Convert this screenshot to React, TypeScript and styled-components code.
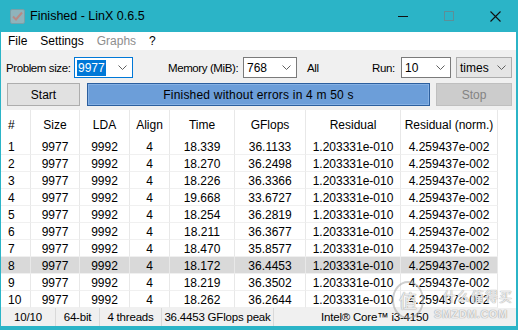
import React from 'react'
import styled, { createGlobalStyle } from 'styled-components'

const GlobalStyle = createGlobalStyle`
    html, body {
        margin: 0;
        padding: 0;
        background: #2bb4c7;
    }
    body {
        font-family: "Liberation Sans", Arial, sans-serif;
        font-size: 12px;
        color: #000;
    }
`

const Frame = styled.div`
    width: 518px;
    height: 330px;
    display: flex;
    flex-direction: column;
    background: #2bb4c7;
    position: relative;
    overflow: hidden;
`

const TitleBar = styled.div`
    height: 32px;
    display: flex;
    align-items: center;
    padding-left: 10px;
    flex-shrink: 0;
`

const Title = styled.div`
    margin-left: 5px;
    font-size: 12.5px;
    color: #000;
    flex: 1;
`

const WinButton = styled.div`
    width: 46px;
    height: 32px;
    display: flex;
    align-items: center;
    justify-content: center;
`

const Client = styled.div`
    flex: 1;
    margin: 0 2px 4px 1px;
    background: #f0f0f0;
    display: flex;
    flex-direction: column;
    min-height: 0;
`

const MenuBar = styled.div`
    height: 18px;
    background: #fff;
    display: flex;
    align-items: center;
    padding-left: 1px;
`

const MenuItem = styled.div<{ $disabled?: boolean }>`
    padding: 0 7px 0 6px;
    color: ${(p) => (p.$disabled ? '#8d8d8d' : '#000')};
    font-size: 12px;
`

const Controls = styled.div`
    padding: 7px 4px 0 5px;
    display: flex;
    flex-direction: column;
    gap: 5px;
`

const Row = styled.div`
    display: flex;
    align-items: center;
`

const Label = styled.div<{ $ml?: number; $w: number }>`
    margin-left: ${(p) => p.$ml ?? 0}px;
    width: ${(p) => p.$w}px;
    flex-shrink: 0;
    white-space: nowrap;
    font-size: 11.5px;
    letter-spacing: -0.4px;
`

const Combo = styled.div<{ $w: number; $focus?: boolean; $flat?: boolean; $ml?: number }>`
    width: ${(p) => p.$w}px;
    height: 21px;
    margin-left: ${(p) => p.$ml ?? 0}px;
    flex-shrink: 0;
    box-sizing: border-box;
    border: 1px solid ${(p) => (p.$focus ? '#0078d7' : p.$flat ? '#adadad' : '#7a7a7a')};
    background: ${(p) => (p.$flat ? '#e5e5e5' : '#fff')};
    display: flex;
    align-items: center;
    padding-left: 2px;
    position: relative;
`

const ComboText = styled.span<{ $sel?: boolean }>`
    background: ${(p) => (p.$sel ? '#0078d7' : 'transparent')};
    color: ${(p) => (p.$sel ? '#fff' : '#000')};
    padding: 1px 1px;
    line-height: 14px;
`

const Chevron = styled.svg`
    position: absolute;
    right: 5px;
    top: 7px;
`

const Button = styled.div<{ $w: number; $disabled?: boolean }>`
    width: ${(p) => p.$w}px;
    height: 23px;
    box-sizing: border-box;
    border: 1px solid ${(p) => (p.$disabled ? '#bfbfbf' : '#adadad')};
    background: ${(p) => (p.$disabled ? '#cccccc' : '#e1e1e1')};
    color: ${(p) => (p.$disabled ? '#838383' : '#000')};
    display: flex;
    align-items: center;
    justify-content: center;
    flex-shrink: 0;
`

const StartButton = styled(Button)`
    margin-left: 1px;
`

const Progress = styled.div`
    width: 343px;
    height: 23px;
    margin: 0 6px 0 7px;
    box-sizing: border-box;
    border: 1px solid #2c5f9e;
    box-shadow: inset 0 0 0 1px #86b1e4;
    background: #6c9ed9;
    display: flex;
    align-items: center;
    justify-content: center;
    color: #000;
    letter-spacing: 0.2px;
`

const Table = styled.div`
    margin-top: 4px;
    flex: 1;
    background: #fff;
    display: flex;
    flex-direction: column;
    min-height: 0;
`

const cols = '30px 49px 50px 40px 65px 71px 95px 97px 1fr'

const HeadRow = styled.div`
    display: grid;
    grid-template-columns: ${cols};
    height: 28px;
`

const BodyRow = styled.div<{ $sel?: boolean }>`
    display: grid;
    grid-template-columns: ${cols};
    height: 17px;
    background: ${(p) => (p.$sel ? '#d9d9d9' : '#fff')};
`

const Cell = styled.div<{ $left?: boolean; $last?: boolean; $head?: boolean }>`
    display: flex;
    align-items: center;
    justify-content: ${(p) => (p.$left ? 'flex-start' : 'center')};
    padding-left: ${(p) => (p.$left ? 7 : 0)}px;
    padding-top: ${(p) => (p.$head ? 2 : 1)}px;
    border-right: ${(p) => (p.$last ? 'none' : '1px solid #e8e8e8')};
    border-bottom: ${(p) => (p.$head ? 'none' : '1px solid #f0f0f0')};
    box-sizing: border-box;
    white-space: nowrap;
    overflow: hidden;
`

const Filler = styled.div`
    background: #fff;
`

const TableRest = styled(Filler)`
    flex: 1;
`

const StatusBar = styled.div`
    height: 18px;
    display: grid;
    grid-template-columns: 55px 44px 62px 112px 1fr;
    background: #f0f0f0;
    flex-shrink: 0;
    font-size: 11.5px;
`

const StatusCell = styled.div<{ $last?: boolean }>`
    display: flex;
    align-items: center;
    justify-content: center;
    border-right: ${(p) => (p.$last ? 'none' : '1px solid #d9d9d9')};
    white-space: nowrap;
    overflow: hidden;
    letter-spacing: -0.2px;
`

const StatusCpu = styled(StatusCell)`
    justify-content: flex-start;
    padding-left: 47px;
`

const Watermark = styled.div`
    position: absolute;
    right: 0;
    bottom: 3px;
    width: 130px;
    height: 46px;
    pointer-events: none;
    color: rgba(255, 255, 255, 0.8);
    text-shadow: 0 0 1px #a0a0a0, 0 0 1px #a0a0a0;
    font-family: "Noto Sans CJK SC", sans-serif;
`

const WmCircle = styled.div`
    position: absolute;
    left: 4px;
    top: 0;
    width: 28px;
    height: 34px;
    border-radius: 50%;
    border: 2px solid rgba(160, 160, 160, 0.5);
    display: flex;
    align-items: center;
    justify-content: center;
    font-size: 18px;
`

const WmCn = styled.div`
    position: absolute;
    left: 55px;
    top: 5px;
    font-size: 13px;
    letter-spacing: 1px;
`

const WmEn = styled.div`
    position: absolute;
    left: 46px;
    top: 27px;
    font-size: 11px;
    font-family: "Liberation Sans", sans-serif;
    font-weight: bold;
    letter-spacing: 0.5px;
`

const times = [
    ['18.339', '36.1133'],
    ['18.270', '36.2498'],
    ['18.226', '36.3366'],
    ['19.668', '33.6727'],
    ['18.254', '36.2819'],
    ['18.211', '36.3677'],
    ['18.470', '35.8577'],
    ['18.172', '36.4453'],
    ['18.219', '36.3502'],
    ['18.262', '36.2644'],
]

const headers = ['Size', 'LDA', 'Align', 'Time', 'GFlops', 'Residual', 'Residual (norm.)']

const Arrow = () => (
    <Chevron width="9" height="6" viewBox="0 0 9 6">
        <path d="M0.5 0.5 L4.5 4.5 L8.5 0.5" fill="none" stroke="#606060" strokeWidth="1" />
    </Chevron>
)

const App = () => {
    return (
        <>
            <GlobalStyle />
            <Frame>
                <TitleBar>
                    <svg width="15" height="15" viewBox="0 0 15 15">
                        <rect x="0.5" y="0.5" width="14" height="14" rx="1.5" fill="#8fb3bb" stroke="#7aa0a8" />
                        <path d="M3 7.5 L6 10.5 L12 3.5" fill="none" stroke="#b88a84" strokeWidth="2" />
                    </svg>
                    <Title>Finished - LinX 0.6.5</Title>
                    <WinButton>
                        <svg width="10" height="10" viewBox="0 0 10 10">
                            <path d="M0 5.5 H10" stroke="#111" strokeWidth="1" />
                        </svg>
                    </WinButton>
                    <WinButton>
                        <svg width="10" height="10" viewBox="0 0 10 10">
                            <rect x="0.5" y="0.5" width="9" height="9" fill="none" stroke="#5c8f98" strokeWidth="1" />
                        </svg>
                    </WinButton>
                    <WinButton>
                        <svg width="11" height="11" viewBox="0 0 11 11">
                            <path d="M0.5 0.5 L10.5 10.5 M10.5 0.5 L0.5 10.5" stroke="#111" strokeWidth="1.1" />
                        </svg>
                    </WinButton>
                </TitleBar>
                <Client>
                    <MenuBar>
                        <MenuItem>File</MenuItem>
                        <MenuItem>Settings</MenuItem>
                        <MenuItem $disabled>Graphs</MenuItem>
                        <MenuItem>?</MenuItem>
                    </MenuBar>
                    <Controls>
                        <Row>
                            <Label $w={68}>Problem size:</Label>
                            <Combo $w={59} $focus>
                                <ComboText $sel>9977</ComboText>
                                <Arrow />
                            </Combo>
                            <Label $ml={35} $w={75}>Memory (MiB):</Label>
                            <Combo $w={54}>
                                <ComboText>768</ComboText>
                                <Arrow />
                            </Combo>
                            <Label $ml={10} $w={16}>All</Label>
                            <Label $ml={49} $w={29}>Run:</Label>
                            <Combo $w={50}>
                                <ComboText>10</ComboText>
                                <Arrow />
                            </Combo>
                            <Combo $w={56} $ml={5} $flat>
                                <ComboText>times</ComboText>
                                <Arrow />
                            </Combo>
                        </Row>
                        <Row>
                            <StartButton $w={73}>Start</StartButton>
                            <Progress>Finished without errors in 4 m 50 s</Progress>
                            <Button $w={76} $disabled>Stop</Button>
                        </Row>
                    </Controls>
                    <Table>
                        <HeadRow>
                            <Cell $left $head>#</Cell>
                            {headers.map((h) => (
                                <Cell $head key={h}>{h}</Cell>
                            ))}
                            <Filler />
                        </HeadRow>
                        {times.map((t, i) => (
                            <BodyRow key={i} $sel={i === 7}>
                                <Cell $left>{i + 1}</Cell>
                                <Cell>9977</Cell>
                                <Cell>9992</Cell>
                                <Cell>4</Cell>
                                <Cell>{t[0]}</Cell>
                                <Cell>{t[1]}</Cell>
                                <Cell>1.203331e-010</Cell>
                                <Cell>4.259437e-002</Cell>
                                <Filler />
                            </BodyRow>
                        ))}
                        <TableRest />
                    </Table>
                    <StatusBar>
                        <StatusCell>10/10</StatusCell>
                        <StatusCell>64-bit</StatusCell>
                        <StatusCell>4 threads</StatusCell>
                        <StatusCell>36.4453 GFlops peak</StatusCell>
                        <StatusCpu $last>Intel® Core™ i3-4150</StatusCpu>
                    </StatusBar>
                </Client>
                <Watermark>
                    <WmCircle>值</WmCircle>
                    <WmCn>什么值得买</WmCn>
                    <WmEn>SMZDM.COM</WmEn>
                </Watermark>
            </Frame>
        </>
    )
}

export default App
